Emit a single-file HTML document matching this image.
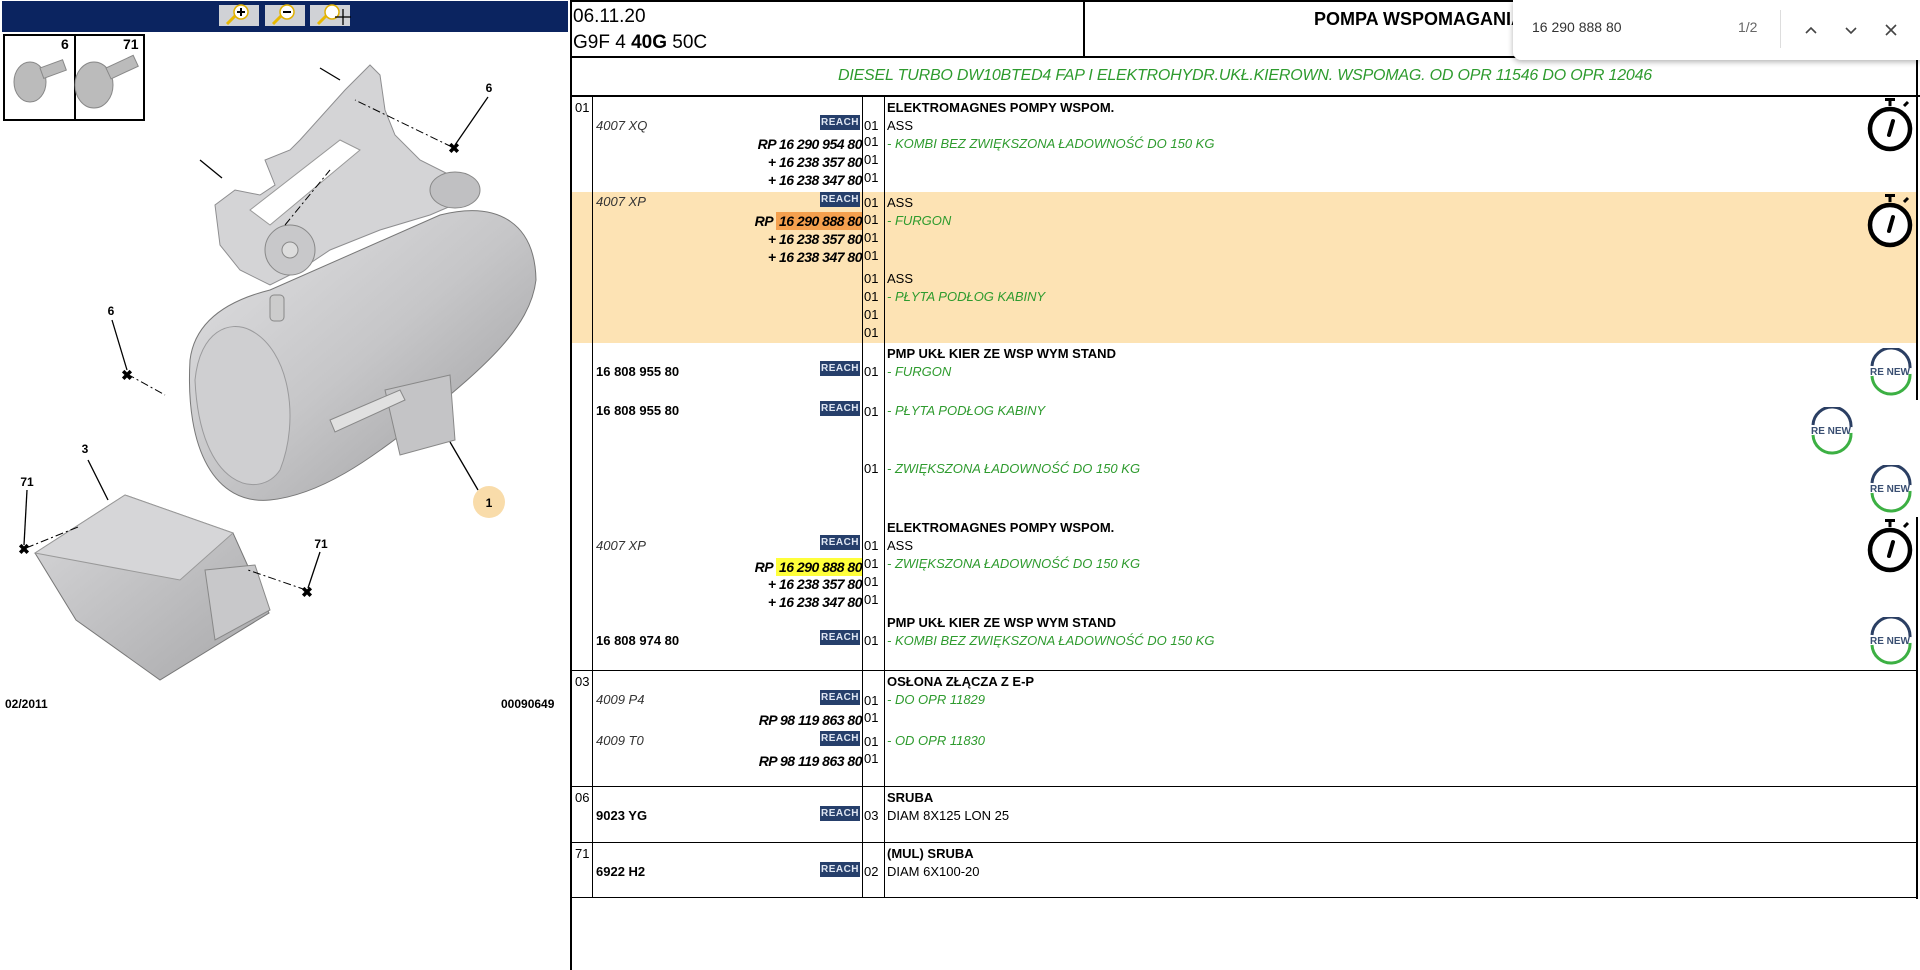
<!DOCTYPE html>
<html><head><meta charset="utf-8"><style>
*{margin:0;padding:0;box-sizing:border-box}
body{width:1920px;height:970px;background:#fff;position:relative;overflow:hidden;font-family:"Liberation Sans",Arial,sans-serif;color:#000}
.a{position:absolute;white-space:nowrap}
.t{font-size:13px;line-height:18px}
.b{font-weight:bold}
.i{font-style:italic}
.g{color:#2e9b2e;font-style:italic}
.reach{position:absolute;left:820px;width:40px;height:15px;background:#263f6b;color:#dfe6f2;font-size:10px;font-weight:bold;line-height:15px;text-align:center;letter-spacing:0.5px}
.hl{position:absolute;background:#000}
.n{position:absolute;left:864px;font-size:13px;line-height:18px;width:20px}
.pn{position:absolute;right:1058px;font-size:14px;font-style:italic;font-weight:bold;line-height:18px;letter-spacing:-0.5px}
.pn span{display:inline-block;padding-left:3px}
</style></head><body>

<div class="a" style="left:2px;top:1px;width:566px;height:31px;background:#0b2460"></div>
<div class="a" style="left:219px;top:5px;width:40px;height:21px;background:#d0d2d6"></div>
<div class="a" style="left:265px;top:5px;width:40px;height:21px;background:#d0d2d6"></div>
<div class="a" style="left:310px;top:5px;width:40px;height:21px;background:#d0d2d6"></div>
<svg class="a" style="left:0;top:0" width="570" height="32">
 <g stroke="#e8b800" stroke-width="3" fill="none"><line x1="227" y1="24" x2="235" y2="16"/><line x1="273" y1="24" x2="281" y2="16"/><line x1="318" y1="24" x2="326" y2="16"/></g>
 <g fill="#ffffff" stroke="#e0b000" stroke-width="1.5"><circle cx="241" cy="12" r="7"/><circle cx="287" cy="12" r="7"/><circle cx="332" cy="12" r="7"/></g>
 <g stroke="#000" stroke-width="2"><line x1="237" y1="12" x2="245" y2="12"/><line x1="241" y1="8" x2="241" y2="16"/><line x1="283" y1="12" x2="291" y2="12"/></g>
 <g stroke="#000" stroke-width="1.3"><line x1="343" y1="9" x2="343" y2="25"/><line x1="335" y1="17" x2="351" y2="17"/></g>
</svg>

<div class="a" style="left:3px;top:34px;width:142px;height:87px;border:2px solid #000"></div>
<div class="a" style="left:74px;top:34px;width:2px;height:87px;background:#000"></div>
<div class="a b" style="left:61px;top:36px;font-size:14px">6</div>
<div class="a b" style="left:123px;top:36px;font-size:14px">71</div>
<svg class="a" style="left:0;top:0" width="570" height="700">
 <defs>
  <linearGradient id="bd" x1="0" y1="0" x2="1" y2="1"><stop offset="0" stop-color="#e2e2e4"/><stop offset="0.5" stop-color="#c6c6c8"/><stop offset="1" stop-color="#9a9a9c"/></linearGradient>
  <linearGradient id="bx" x1="0" y1="0" x2="1" y2="1"><stop offset="0" stop-color="#d8d8da"/><stop offset="1" stop-color="#a8a8aa"/></linearGradient>
 </defs>
 <g fill="#bbb" stroke="#888"><ellipse cx="30" cy="82" rx="16" ry="20"/><rect x="40" y="68" width="24" height="11" transform="rotate(-20 40 68)"/><ellipse cx="94" cy="85" rx="19" ry="23"/><rect x="106" y="68" width="30" height="12" transform="rotate(-25 106 68)"/></g>
 <path d="M220,245 L215,205 L235,190 L260,195 L275,185 L265,160 L290,150 L300,140 L345,90 L370,65 L380,75 L385,110 L395,135 L420,160 L450,175 L465,200 L430,215 L380,230 L330,250 L300,270 L270,285 L240,270 Z" fill="#d4d4d6" stroke="#8e8e90"/>
 <path d="M250,210 L340,140 L360,150 L270,225 Z" fill="#fff" stroke="#999"/>
 <circle cx="290" cy="250" r="25" fill="#c8c8ca" stroke="#888"/><circle cx="290" cy="250" r="8" fill="#ddd" stroke="#888"/>
 <ellipse cx="455" cy="190" rx="25" ry="18" fill="#c0c0c2" stroke="#888"/>
 <path d="M190,360 C195,320 230,300 270,290 L440,215 C500,200 535,225 536,280 C530,330 480,370 420,420 C370,460 320,495 270,500 C215,505 185,450 190,360 Z" fill="url(#bd)" stroke="#777"/>
 <path d="M195,380 C200,330 230,320 250,330 C290,350 300,420 280,470 C260,500 200,490 195,380 Z" fill="#cfcfd1" stroke="#9a9a9c"/>
 <rect x="270" y="295" width="14" height="26" rx="4" fill="#ccc" stroke="#888"/>
 <path d="M385,390 L450,375 L455,440 L400,455 Z" fill="#c4c4c6" stroke="#888"/>
 <path d="M330,420 L400,390 L405,400 L335,432 Z" fill="#e0e0e0" stroke="#888"/>
 <path d="M35,553 L125,495 L233,533 L269,613 L160,680 L76,620 Z" fill="url(#bx)" stroke="#777"/>
 <path d="M35,553 L125,495 L233,533 L180,580 Z" fill="#d6d6d8" stroke="#999"/>
 <path d="M205,570 L255,565 L270,610 L215,640 Z" fill="#c8c8ca" stroke="#888"/>
 <g stroke="#000" stroke-width="1.3" fill="none">
  <line x1="488" y1="97" x2="455" y2="145"/><line x1="112" y1="320" x2="127" y2="370"/>
  <line x1="88" y1="460" x2="108" y2="500"/><line x1="27" y1="490" x2="24" y2="545"/>
  <line x1="320" y1="552" x2="308" y2="588"/><line x1="450" y1="442" x2="478" y2="490"/>
  <line x1="200" y1="160" x2="222" y2="178"/><line x1="320" y1="68" x2="340" y2="80"/>
 </g>
 <g stroke="#000" stroke-width="1" stroke-dasharray="8,3,2,3" fill="none">
  <line x1="127" y1="374" x2="165" y2="395"/><line x1="26" y1="548" x2="78" y2="527"/><line x1="306" y1="590" x2="248" y2="570"/><line x1="452" y1="147" x2="355" y2="100"/><line x1="285" y1="225" x2="330" y2="170"/>
 </g>
 <g font-family="Liberation Sans" font-size="12" font-weight="bold" fill="#000" text-anchor="middle">
  <text x="489" y="92">6</text><text x="111" y="315">6</text><text x="85" y="453">3</text><text x="27" y="486">71</text><text x="321" y="548">71</text>
 </g>
 <g font-family="Liberation Sans" font-size="14" font-weight="bold" fill="#000" text-anchor="middle">
  <text x="454" y="153">✖</text><text x="127" y="380">✖</text><text x="24" y="554">✖</text><text x="307" y="597">✖</text>
 </g>
 <circle cx="489" cy="502" r="16" fill="#f9dcaa"/>
 <text x="489" y="507" font-family="Liberation Sans" font-size="12" font-weight="bold" text-anchor="middle">1</text>
</svg>
<div class="a b" style="left:5px;top:697px;font-size:12px">02/2011</div>
<div class="a b" style="left:501px;top:697px;font-size:12px">00090649</div>

<div class="hl" style="left:570px;top:0;width:2px;height:970px"></div>
<div class="hl" style="left:570px;top:0;width:1350px;height:2px"></div>
<div class="hl" style="left:570px;top:56px;width:1350px;height:2px"></div>
<div class="hl" style="left:570px;top:95px;width:1350px;height:2px"></div>
<div class="hl" style="left:1083px;top:0;width:2px;height:57px"></div>
<div class="hl" style="left:1916px;top:0;width:2px;height:400px"></div>
<div class="hl" style="left:1916px;top:517px;width:2px;height:382px"></div>

<div class="a" style="left:573px;top:6px;font-size:19px">06.11.20</div>
<div class="a" style="left:573px;top:32px;font-size:19px">G9F 4 <b>40G</b> 50C</div>
<div class="a b" style="left:1314px;top:9px;font-size:18px">POMPA WSPOMAGANIA</div>
<div class="a g" style="left:572px;width:1346px;top:67px;font-size:16px;text-align:center;letter-spacing:-0.2px">DIESEL TURBO DW10BTED4 FAP I ELEKTROHYDR.UKŁ.KIEROWN. WSPOMAG. OD OPR 11546 DO OPR 12046</div>

<div class="a" style="left:572px;top:192px;width:1344px;height:151px;background:#fde3b4"></div>

<div class="hl" style="left:592px;top:96px;width:1px;height:802px"></div>
<div class="hl" style="left:862px;top:96px;width:1px;height:802px"></div>
<div class="hl" style="left:884px;top:96px;width:1px;height:802px"></div>
<div class="hl" style="left:570px;top:670px;width:1348px;height:1px"></div>
<div class="hl" style="left:570px;top:786px;width:1348px;height:1px"></div>
<div class="hl" style="left:570px;top:842px;width:1348px;height:1px"></div>
<div class="hl" style="left:570px;top:897px;width:1348px;height:1px"></div>

<div class="a t" style="left:575px;top:99px">01</div>
<div class="a t" style="left:575px;top:673px">03</div>
<div class="a t" style="left:575px;top:789px">06</div>
<div class="a t" style="left:575px;top:845px">71</div>

<div class="a t b" style="left:887px;top:99px">ELEKTROMAGNES POMPY WSPOM.</div>
<div class="a t i" style="left:596px;top:117px;color:#333">4007 XQ</div>
<div class="reach" style="top:115px">REACH</div>
<div class="n" style="top:117px">01</div><div class="a t" style="left:887px;top:117px">ASS</div>
<div class="pn" style="top:135px">RP 16 290 954 80</div><div class="n" style="top:133px">01</div><div class="a t g" style="left:887px;top:135px">- KOMBI BEZ ZWIĘKSZONA ŁADOWNOŚĆ DO 150 KG</div>
<div class="pn" style="top:153px">+ 16 238 357 80</div><div class="n" style="top:151px">01</div>
<div class="pn" style="top:171px">+ 16 238 347 80</div><div class="n" style="top:169px">01</div>

<div class="a t i" style="left:596px;top:193px;color:#333">4007 XP</div>
<div class="reach" style="top:192px">REACH</div>
<div class="n" style="top:194px">01</div><div class="a t" style="left:887px;top:194px">ASS</div>
<div class="pn" style="top:212px">RP <span style="background:#f4a04e">16 290 888 80</span></div><div class="n" style="top:211px">01</div><div class="a t g" style="left:887px;top:212px">- FURGON</div>
<div class="pn" style="top:230px">+ 16 238 357 80</div><div class="n" style="top:229px">01</div>
<div class="pn" style="top:248px">+ 16 238 347 80</div><div class="n" style="top:247px">01</div>
<div class="n" style="top:270px">01</div><div class="a t" style="left:887px;top:270px">ASS</div>
<div class="n" style="top:288px">01</div><div class="a t g" style="left:887px;top:288px">- PŁYTA PODŁOG KABINY</div>
<div class="n" style="top:306px">01</div>
<div class="n" style="top:324px">01</div>

<div class="a t b" style="left:887px;top:345px">PMP UKŁ KIER ZE WSP WYM STAND</div>
<div class="a t b" style="left:596px;top:363px">16 808 955 80</div>
<div class="reach" style="top:361px">REACH</div>
<div class="n" style="top:363px">01</div><div class="a t g" style="left:887px;top:363px">- FURGON</div>
<div class="a t b" style="left:596px;top:402px">16 808 955 80</div>
<div class="reach" style="top:401px">REACH</div>
<div class="n" style="top:403px">01</div><div class="a t g" style="left:887px;top:402px">- PŁYTA PODŁOG KABINY</div>
<div class="n" style="top:460px">01</div><div class="a t g" style="left:887px;top:460px">- ZWIĘKSZONA ŁADOWNOŚĆ DO 150 KG</div>

<div class="a t b" style="left:887px;top:519px">ELEKTROMAGNES POMPY WSPOM.</div>
<div class="a t i" style="left:596px;top:537px;color:#333">4007 XP</div>
<div class="reach" style="top:535px">REACH</div>
<div class="n" style="top:537px">01</div><div class="a t" style="left:887px;top:537px">ASS</div>
<div class="pn" style="top:558px">RP <span style="background:#ffff3a">16 290 888 80</span></div><div class="n" style="top:555px">01</div><div class="a t g" style="left:887px;top:555px">- ZWIĘKSZONA ŁADOWNOŚĆ DO 150 KG</div>
<div class="pn" style="top:575px">+ 16 238 357 80</div><div class="n" style="top:573px">01</div>
<div class="pn" style="top:593px">+ 16 238 347 80</div><div class="n" style="top:591px">01</div>

<div class="a t b" style="left:887px;top:614px">PMP UKŁ KIER ZE WSP WYM STAND</div>
<div class="a t b" style="left:596px;top:632px">16 808 974 80</div>
<div class="reach" style="top:630px">REACH</div>
<div class="n" style="top:632px">01</div><div class="a t g" style="left:887px;top:632px">- KOMBI BEZ ZWIĘKSZONA ŁADOWNOŚĆ DO 150 KG</div>

<div class="a t b" style="left:887px;top:673px">OSŁONA ZŁĄCZA Z E-P</div>
<div class="a t i" style="left:596px;top:691px;color:#333">4009 P4</div>
<div class="reach" style="top:690px">REACH</div>
<div class="n" style="top:692px">01</div><div class="a t g" style="left:887px;top:691px">- DO OPR 11829</div>
<div class="pn" style="top:711px">RP 98 119 863 80</div><div class="n" style="top:709px">01</div>
<div class="a t i" style="left:596px;top:732px;color:#333">4009 T0</div>
<div class="reach" style="top:731px">REACH</div>
<div class="n" style="top:733px">01</div><div class="a t g" style="left:887px;top:732px">- OD OPR 11830</div>
<div class="pn" style="top:752px">RP 98 119 863 80</div><div class="n" style="top:750px">01</div>

<div class="a t b" style="left:887px;top:789px">SRUBA</div>
<div class="a t b" style="left:596px;top:807px">9023 YG</div>
<div class="reach" style="top:806px">REACH</div>
<div class="n" style="top:807px">03</div><div class="a t" style="left:887px;top:807px">DIAM 8X125 LON 25</div>

<div class="a t b" style="left:887px;top:845px">(MUL) SRUBA</div>
<div class="a t b" style="left:596px;top:863px">6922 H2</div>
<div class="reach" style="top:862px">REACH</div>
<div class="n" style="top:863px">02</div><div class="a t" style="left:887px;top:863px">DIAM 6X100-20</div>

<svg width="0" height="0" style="position:absolute"><defs>
 <g id="sw"><rect x="19" y="1" width="10" height="3" fill="#000"/><rect x="22.5" y="3" width="3" height="6" fill="#000"/><line x1="38" y1="9" x2="42" y2="5" stroke="#000" stroke-width="3"/><circle cx="24" cy="32" r="20" fill="#fff" stroke="#000" stroke-width="4.5"/><path d="M23,38 L27,24" stroke="#000" stroke-width="4" stroke-linecap="round"/></g>
 <g id="rn"><path d="M6,18 A19,19 0 0 1 44,20" stroke="#2b3f63" stroke-width="3" fill="none"/><path d="M44,26 A19,19 0 0 1 6,28" stroke="#3cb043" stroke-width="3" fill="none"/><text x="4" y="27" font-family="Liberation Sans" font-size="10" font-weight="bold" fill="#3a4f72">RE NEW</text></g>
</defs></svg>
<svg class="a" style="left:1866px;top:97px" width="48" height="56"><use href="#sw"/></svg>
<svg class="a" style="left:1866px;top:193px" width="48" height="56"><use href="#sw"/></svg>
<svg class="a" style="left:1866px;top:518px" width="48" height="56"><use href="#sw"/></svg>
<svg class="a" style="left:1866px;top:348px" width="50" height="50"><use href="#rn"/></svg>
<svg class="a" style="left:1807px;top:407px" width="50" height="50"><use href="#rn"/></svg>
<svg class="a" style="left:1866px;top:465px" width="50" height="50"><use href="#rn"/></svg>
<svg class="a" style="left:1866px;top:617px" width="50" height="50"><use href="#rn"/></svg>

<div class="a" style="left:1513px;top:0;width:407px;height:60px;background:#fff;border-radius:0 0 0 8px;box-shadow:0 2px 6px rgba(0,0,0,0.3)"></div>
<div class="a" style="left:1532px;top:19px;font-size:14px;color:#333">16 290 888 80</div>
<div class="a" style="left:1738px;top:19px;font-size:14px;color:#666">1/2</div>
<div class="a" style="left:1780px;top:10px;width:1px;height:38px;background:#ddd"></div>
<svg class="a" style="left:1800px;top:20px" width="110" height="20">
 <g stroke="#444" stroke-width="1.6" fill="none"><path d="M6,13 L11,8 L16,13"/><path d="M46,8 L51,13 L56,8"/><path d="M86,5 L96,15 M96,5 L86,15"/></g>
</svg>
</body></html>
